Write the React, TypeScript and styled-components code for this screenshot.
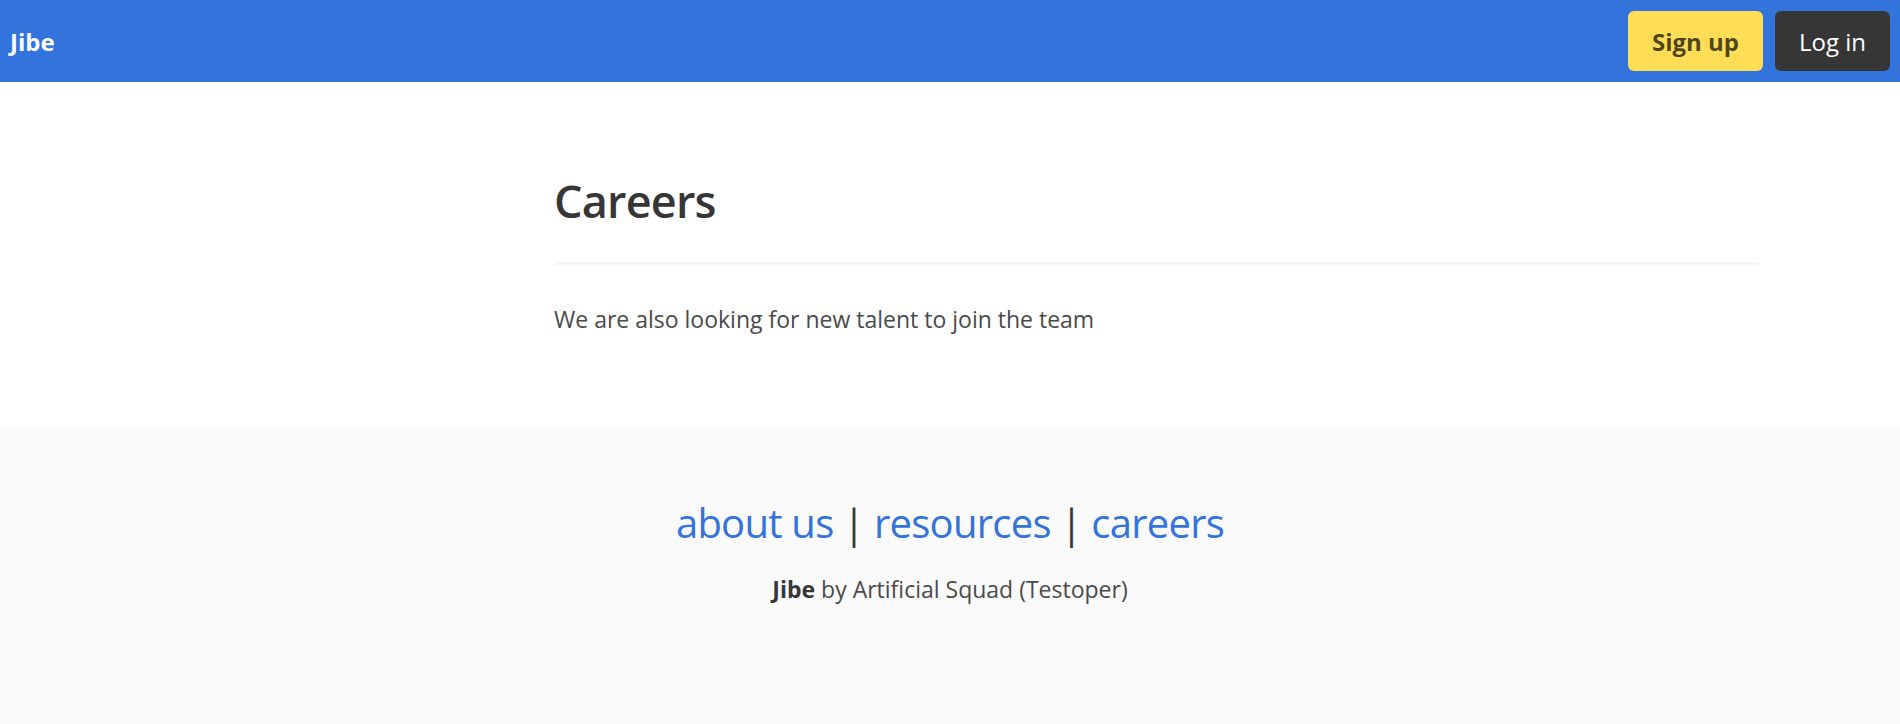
import React from "react";
import styled, { createGlobalStyle } from "styled-components";

const Global = createGlobalStyle`
  html, body { margin: 0; padding: 0; }
  body {
    font-family: "Open Sans", "Noto Sans", sans-serif;
    color: #4a4a4a;
    background: #ffffff;
  }
  * { box-sizing: border-box; }
`;

const Page = styled.div`
  min-height: 100vh;
  display: flex;
  flex-direction: column;
`;

const Nav = styled.nav`
  height: 82px;
  background: #3273dc;
  display: flex;
  align-items: center;
  justify-content: space-between;
  padding: 0 10px;
`;

const Brand = styled.a`
  color: #ffffff;
  font-weight: 700;
  font-size: 24px;
  text-decoration: none;
`;

const NavButtons = styled.div`
  display: flex;
  gap: 12px;
`;

const Button = styled.a<{ $variant: "warning" | "dark" }>`
  height: 60px;
  padding: 0 24px;
  display: inline-flex;
  align-items: center;
  border-radius: 6px;
  font-size: 24px;
  text-decoration: none;
  background: ${(p) => (p.$variant === "warning" ? "#ffdd57" : "#363636")};
  color: ${(p) => (p.$variant === "warning" ? "rgba(0,0,0,0.7)" : "#ffffff")};
  font-weight: ${(p) => (p.$variant === "warning" ? 700 : 400)};
`;

const Main = styled.main`
  display: grid;
  grid-template-columns: 554px 1fr 141px;
  padding: 92px 0 90px;
`;

const Content = styled.section`
  grid-column: 2;
`;

const Title = styled.h1`
  margin: 0;
  font-size: 45px;
  line-height: 54px;
  letter-spacing: -0.8px;
  font-weight: 600;
  color: #363636;
`;

const Rule = styled.hr`
  margin: 34px 0 36px;
  height: 3px;
  border: none;
  background: #f5f5f5;
`;

const Text = styled.p`
  margin: 0;
  font-size: 23px;
  line-height: 36px;
`;

const Footer = styled.footer`
  flex: 1;
  background: #fafafa;
  padding: 69px 0 0;
  text-align: center;
`;

const Links = styled.p`
  margin: 0;
  font-size: 40px;
  line-height: 54px;
  letter-spacing: -0.75px;
  color: #363636;
`;

const FootLink = styled.a`
  color: #3273dc;
  text-decoration: none;
`;

const Credit = styled.p`
  margin: 21px 0 0;
  font-size: 23px;
  line-height: 36px;
  strong { color: #363636; font-weight: 700; }
`;

export default function App() {
  return (
    <Page>
      <Global />
      <Nav>
        <Brand href="#">Jibe</Brand>
        <NavButtons>
          <Button $variant="warning" href="#">Sign up</Button>
          <Button $variant="dark" href="#">Log in</Button>
        </NavButtons>
      </Nav>
      <Main>
        <Content>
          <Title>Careers</Title>
          <Rule />
          <Text>We are also looking for new talent to join the team</Text>
        </Content>
      </Main>
      <Footer>
        <Links>
          <FootLink href="#">about us</FootLink> | <FootLink href="#">resources</FootLink> |{" "}
          <FootLink href="#">careers</FootLink>
        </Links>
        <Credit>
          <strong>Jibe</strong> by Artificial Squad (Testoper)
        </Credit>
      </Footer>
    </Page>
  );
}
